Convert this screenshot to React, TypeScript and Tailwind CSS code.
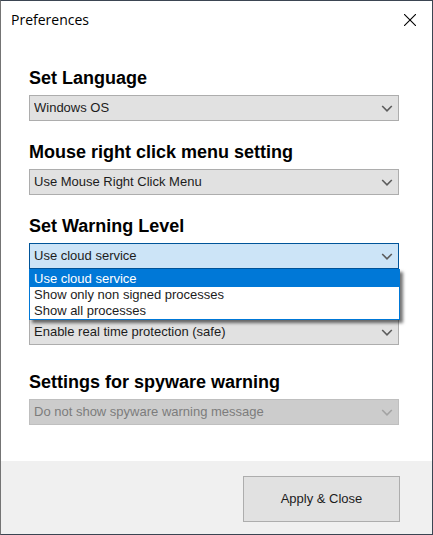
import { useState, type ReactNode } from "react";

type DropdownProps = {
  id: string;
  label?: string;
  hiddenLabel?: string;
  options: string[];
  disabled?: boolean;
};

function Chevron({ className }: { className: string }) {
  return (
    <svg
      viewBox="0 0 12 8"
      aria-hidden="true"
      className={`pointer-events-none absolute top-[10px] right-[6px] h-2 w-3 ${className}`}
    >
      <path d="M1.2 1 L6 5.8 L10.8 1" fill="none" stroke="currentColor" strokeWidth="1.6" />
    </svg>
  );
}

function Heading({ htmlFor, children }: { htmlFor: string; children: ReactNode }) {
  return (
    <label htmlFor={htmlFor} className="mb-1.5 block text-lg leading-[22px] font-bold text-black">
      {children}
    </label>
  );
}

function Dropdown({ id, label, hiddenLabel, options, disabled }: DropdownProps) {
  return (
    <div>
      {label && <Heading htmlFor={id}>{label}</Heading>}
      <div className="relative">
        <select
          id={id}
          aria-label={hiddenLabel}
          disabled={disabled}
          className="block h-[26px] w-full appearance-none border border-[#adadad] bg-[#e1e1e1] pr-6 pl-1 text-[13px] text-[#1c1c1c] outline-none disabled:border-[#bfbfbf] disabled:bg-[#cccccc] disabled:text-[#7c7c7c] disabled:opacity-100"
        >
          {options.map((option) => (
            <option key={option}>{option}</option>
          ))}
        </select>
        <Chevron className={disabled ? "text-[#a3a3a3]" : "text-[#5c5c5c]"} />
      </div>
    </div>
  );
}

const warningLevels = ["Use cloud service", "Show only non signed processes", "Show all processes"];

function WarningLevel() {
  const [open, setOpen] = useState(true);
  const [selected, setSelected] = useState(warningLevels[0]);

  return (
    <div>
      <Heading htmlFor="warning-level">Set Warning Level</Heading>
      <div className="relative">
        <select
          id="warning-level"
          value={selected}
          onChange={(event) => setSelected(event.target.value)}
          onMouseDown={(event) => {
            event.preventDefault();
            setOpen(!open);
          }}
          className="block h-[26px] w-full appearance-none border border-[#005499] bg-[#cce4f7] pr-6 pl-1 text-[13px] text-[#1c1c1c] outline-none"
        >
          {warningLevels.map((level) => (
            <option key={level}>{level}</option>
          ))}
        </select>
        <Chevron className="text-[#5c5c5c]" />
        {open && (
          <div
            role="listbox"
            aria-label="Warning level"
            className="absolute -right-px left-0 top-full z-10 border border-t-2 border-[#0078d7] bg-white shadow-[3px_3px_3px_rgba(0,0,0,0.55)]"
          >
            {warningLevels.map((level) => (
              <button
                key={level}
                type="button"
                role="option"
                aria-selected={level === selected}
                onClick={() => {
                  setSelected(level);
                  setOpen(false);
                }}
                className="block w-full pl-1 text-left text-[13px] leading-4 text-[#1c1c1c] aria-selected:bg-[#0078d7] aria-selected:text-white"
              >
                {level}
              </button>
            ))}
          </div>
        )}
      </div>
    </div>
  );
}

export default function App() {
  return (
    <div className="flex min-h-screen flex-col border border-[#3b4552] border-l-[#747474] bg-white font-['Liberation_Sans',Arial,sans-serif]">
      <header className="flex h-[38px] items-center justify-between pr-3.5 pl-2.5">
        <h1 className="font-['Open_Sans','Noto_Sans',sans-serif] text-sm text-black">Preferences</h1>
        <button type="button" aria-label="Close" className="flex size-4 items-center justify-center">
          <svg viewBox="0 0 12 12" className="size-3" aria-hidden="true">
            <path d="M0 0 L12 12 M12 0 L0 12" stroke="#000" strokeWidth="1.1" />
          </svg>
        </button>
      </header>

      <main className="flex-1 pt-7 pr-[33px] pb-[34px] pl-7">
        <div className="flex flex-col gap-5">
          <Dropdown id="language" label="Set Language" options={["Windows OS"]} />
          <Dropdown
            id="mouse-menu"
            label="Mouse right click menu setting"
            options={["Use Mouse Right Click Menu"]}
          />
          <WarningLevel />
        </div>
        <div className="mt-[50px] flex flex-col gap-[26px]">
          <Dropdown
            id="protection"
            hiddenLabel="Real time protection"
            options={["Enable real time protection (safe)"]}
          />
          <Dropdown
            id="spyware"
            label="Settings for spyware warning"
            options={["Do not show spyware warning message"]}
            disabled
          />
        </div>
      </main>

      <footer className="flex justify-end bg-[#f0f0f0] pt-[15px] pr-8 pb-3">
        <button
          type="button"
          className="h-[46px] w-[157px] border border-[#adadad] bg-[#e1e1e1] text-[13px] text-[#1c1c1c]"
        >
          Apply &amp; Close
        </button>
      </footer>
    </div>
  );
}
